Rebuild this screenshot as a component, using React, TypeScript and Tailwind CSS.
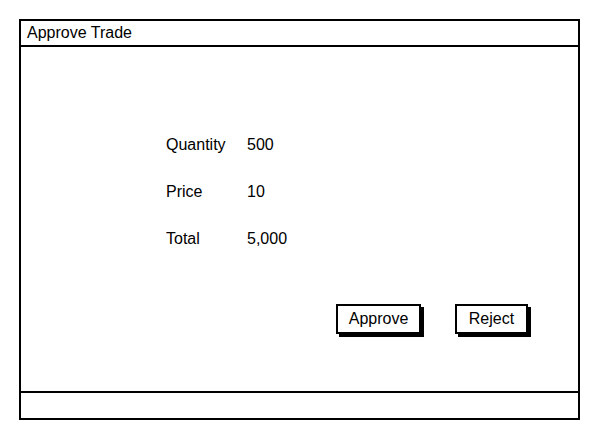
export default function App() {
    const rows = [
        { label: 'Quantity', value: '500' },
        { label: 'Price', value: '10' },
        { label: 'Total', value: '5,000' },
    ]

    return (
        <div className="h-[432px] w-[601px] bg-white pl-[19px] pt-[19px] font-['Liberation_Sans',Arial,sans-serif] text-[16px] leading-[24px] text-black">
            {/* Window frame */}
            <div className="flex h-[401px] w-[561px] flex-col border-2 border-black">
                {/* Title bar */}
                <div className="h-[26px] shrink-0 border-b-2 border-black pl-[6px]">
                    Approve Trade
                </div>

                {/* Body */}
                <div className="flex flex-1 flex-col pl-[145px] pt-[86px]">
                    <div className="flex flex-col gap-[23px]">
                        {rows.map((row) => (
                            <div key={row.label} className="flex">
                                <span className="w-[81px]">{row.label}</span>
                                <span>{row.value}</span>
                            </div>
                        ))}
                    </div>

                    <div className="mt-[53px] flex justify-end gap-[34px] pr-[50px]">
                        <button className="h-[30px] w-[85px] border-2 border-black bg-white shadow-[3px_3px_0_#000]">
                            Approve
                        </button>
                        <button className="h-[30px] w-[73px] border-2 border-black bg-white shadow-[3px_3px_0_#000]">
                            Reject
                        </button>
                    </div>
                </div>

                {/* Footer */}
                <div className="h-[27px] shrink-0 border-t-2 border-black" />
            </div>
        </div>
    )
}
